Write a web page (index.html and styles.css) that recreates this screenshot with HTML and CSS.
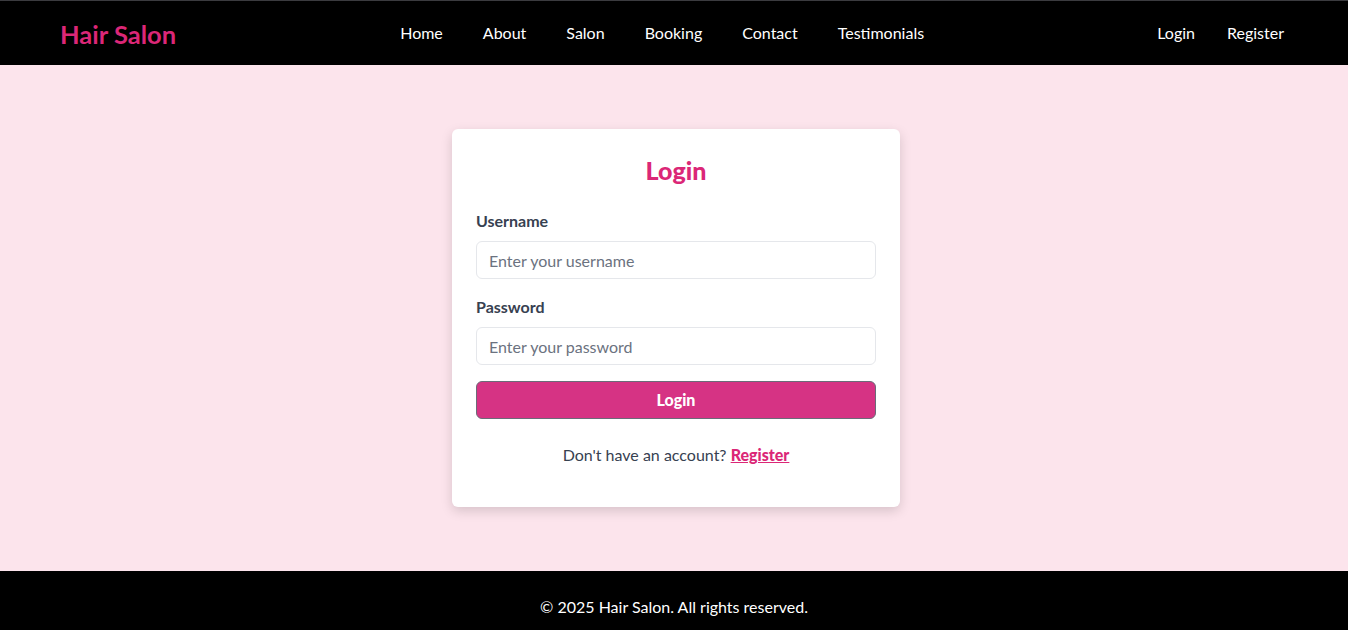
FILE: index.html
```html
<!DOCTYPE html>
<html lang="en">
<head>
<meta charset="utf-8">
<title>Hair Salon - Login</title>
<link rel="stylesheet" href="styles.css">
</head>
<body>
<header class="site-header">
  <a class="logo" href="#">Hair Salon</a>
  <nav class="main-nav">
    <a href="#">Home</a>
    <a href="#">About</a>
    <a href="#">Salon</a>
    <a href="#">Booking</a>
    <a href="#">Contact</a>
    <a href="#">Testimonials</a>
  </nav>
  <nav class="auth-nav">
    <a href="#">Login</a>
    <a href="#">Register</a>
  </nav>
</header>
<main class="main">
  <form class="card">
    <h2 class="card-title">Login</h2>
    <div class="field">
      <label class="field-label" for="username">Username</label>
      <input class="field-input" id="username" type="text" placeholder="Enter your username">
    </div>
    <div class="field">
      <label class="field-label" for="password">Password</label>
      <input class="field-input" id="password" type="password" placeholder="Enter your password">
    </div>
    <button class="btn" type="button">Login</button>
    <p class="switch">Don't have an account? <a href="#">Register</a></p>
  </form>
</main>
<footer class="site-footer">
  <p>&copy; 2025 Hair Salon. All rights reserved.</p>
</footer>
</body>
</html>
```
FILE: styles.css
```css
* { box-sizing: border-box; }
html, body { margin: 0; padding: 0; }
body {
  font-family: Lato, "Open Sans", sans-serif;
  font-size: 16px;
  line-height: 24px;
  background: #fce4ec;
  color: #374151;
}
a { text-decoration: none; color: inherit; }

.site-header {
  background: #000;
  border-top: 1px solid #3b3b3f;
  height: 65px;
  display: flex;
  align-items: center;
  justify-content: space-between;
  padding: 0 64px 0 60px;
}
.logo {
  color: #db2777;
  font-size: 25.5px;
  font-weight: 700;
  line-height: 32px;
  padding-top: 2px;
}
.main-nav, .auth-nav {
  display: flex;
  gap: 40px;
  color: #fff;
}
.main-nav { margin-right: 9px; }
.auth-nav { gap: 32px; }

.main {
  padding: 64px 0 64px 4px;
  display: flex;
  justify-content: center;
}
.card {
  width: 448px;
  background: #fff;
  border-radius: 6px;
  padding: 24px 24px 24px;
  box-shadow: 0 4px 12px rgba(0,0,0,0.15);
}
.card-title {
  margin: 0 0 24px;
  padding-top: 1px;
  height: 32px;
  text-align: center;
  color: #db2777;
  font-size: 25px;
  line-height: 32px;
  font-weight: 900;
}
.field { margin-bottom: 16px; }
.field-label {
  display: block;
  font-weight: 700;
  margin-bottom: 8px;
  color: #374151;
}
.field-input {
  display: block;
  width: 100%;
  height: 38px;
  padding: 0 12px;
  border: 1px solid #e5e7eb;
  border-radius: 6px;
  font: inherit;
  color: #374151;
  background: #fff;
}
.field-input::placeholder { color: #6b7280; }
.btn {
  display: block;
  width: 100%;
  height: 38px;
  border: 1px solid #6b6b78;
  border-radius: 6px;
  background: #d63384;
  color: #fff;
  font: inherit;
  font-weight: 900;
}
.switch {
  margin: 24px 0 16px;
  text-align: center;
  color: #374151;
}
.switch a {
  color: #db2777;
  font-weight: 900;
  text-decoration: underline;
}
.site-footer {
  background: #000;
  color: #fff;
  text-align: center;
  padding: 24px 0;
}
.site-footer p { margin: 0; }
```
